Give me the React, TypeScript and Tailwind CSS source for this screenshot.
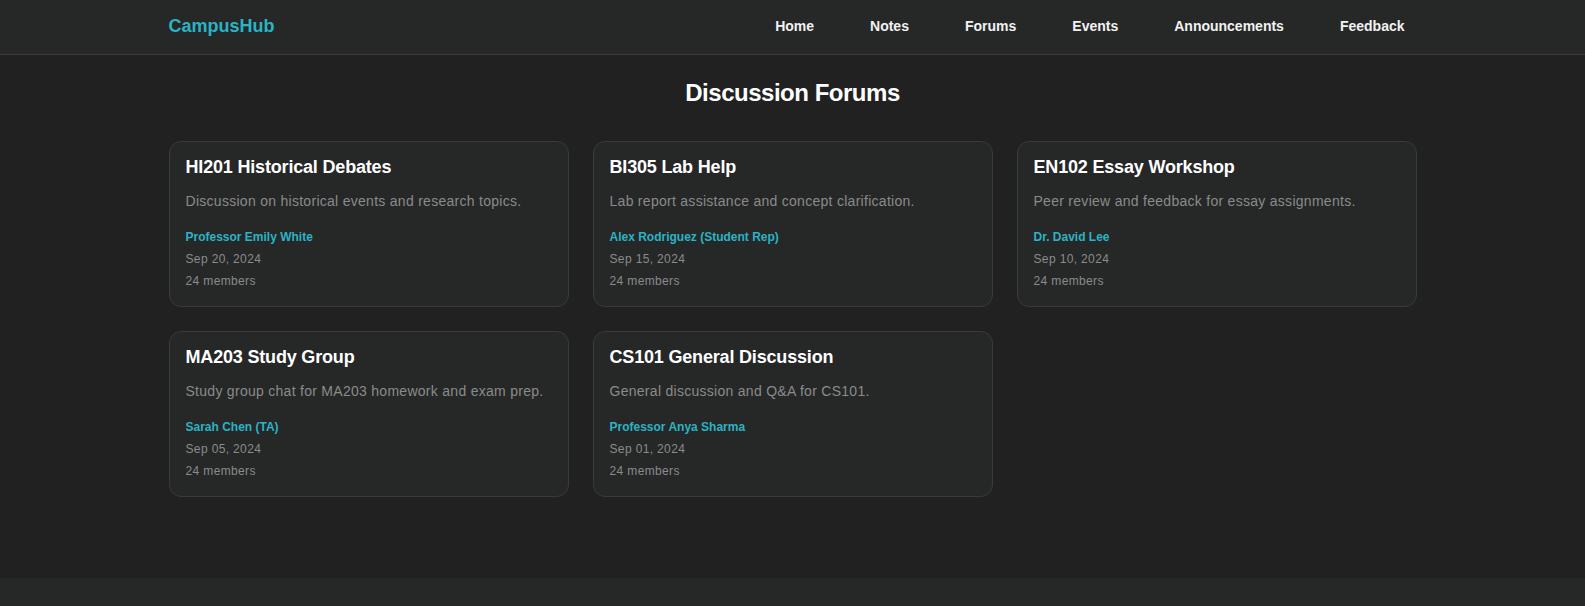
import React from 'react';

type Forum = {
    title: string;
    description: string;
    owner: string;
    date: string;
    members: number;
};

const forums: Forum[] = [
    { title: 'HI201 Historical Debates', description: 'Discussion on historical events and research topics.', owner: 'Professor Emily White', date: 'Sep 20, 2024', members: 24 },
    { title: 'BI305 Lab Help', description: 'Lab report assistance and concept clarification.', owner: 'Alex Rodriguez (Student Rep)', date: 'Sep 15, 2024', members: 24 },
    { title: 'EN102 Essay Workshop', description: 'Peer review and feedback for essay assignments.', owner: 'Dr. David Lee', date: 'Sep 10, 2024', members: 24 },
    { title: 'MA203 Study Group', description: 'Study group chat for MA203 homework and exam prep.', owner: 'Sarah Chen (TA)', date: 'Sep 05, 2024', members: 24 },
    { title: 'CS101 General Discussion', description: 'General discussion and Q&A for CS101.', owner: 'Professor Anya Sharma', date: 'Sep 01, 2024', members: 24 },
];

const links = ['Home', 'Notes', 'Forums', 'Events', 'Announcements', 'Feedback'];

const ForumCard = ({ forum }: { forum: Forum }) => (
    <div className="rounded-xl border border-[#393a3a] bg-[#262727] px-4 pt-4 pb-[17px]">
        <h3 className="text-lg leading-[18px] font-bold tracking-[-0.01em] text-white">{forum.title}</h3>
        <p className="mt-[15px] text-sm leading-5 tracking-[0.02em] text-[#8a8b8b]">{forum.description}</p>
        <div className="mt-[18px] text-xs leading-4 font-semibold text-[#2ab4c5]">{forum.owner}</div>
        <div className="mt-1.5 text-xs leading-4 tracking-[0.03em] text-[#8a8b8b]">{forum.date}</div>
        <div className="mt-1.5 text-xs leading-4 tracking-[0.03em] text-[#8a8b8b]">{forum.members} members</div>
    </div>
);

export default function App() {
    return (
        <div className="min-h-screen bg-[#262827] font-['Liberation_Sans',Arial,sans-serif]">
            {/* top bar */}
            <header className="border-b border-[#3a3c3b] bg-[#262827]">
                <div className="mx-auto flex h-[54px] max-w-7xl items-center justify-between px-4 pb-[2px]">
                    <span className="text-lg font-bold text-[#2ab4c5]">CampusHub</span>
                    <nav className="flex gap-8">
                        {links.map((l) => (
                            <a key={l} href="#" className="px-3 text-sm font-semibold text-[#f2f2f2]">
                                {l}
                            </a>
                        ))}
                    </nav>
                </div>
            </header>

            <main className="bg-[#202120] pt-[22px] pb-[81px]">
                <div className="mx-auto max-w-7xl px-4">
                    <h1 className="mb-8 text-center text-2xl font-bold tracking-[-0.02em] text-white">Discussion Forums</h1>
                    <div className="grid grid-cols-3 gap-6">
                        {forums.map((f) => (
                            <ForumCard key={f.title} forum={f} />
                        ))}
                    </div>
                </div>
            </main>

            <footer className="h-[60px] bg-[#262827]"></footer>
        </div>
    );
}
